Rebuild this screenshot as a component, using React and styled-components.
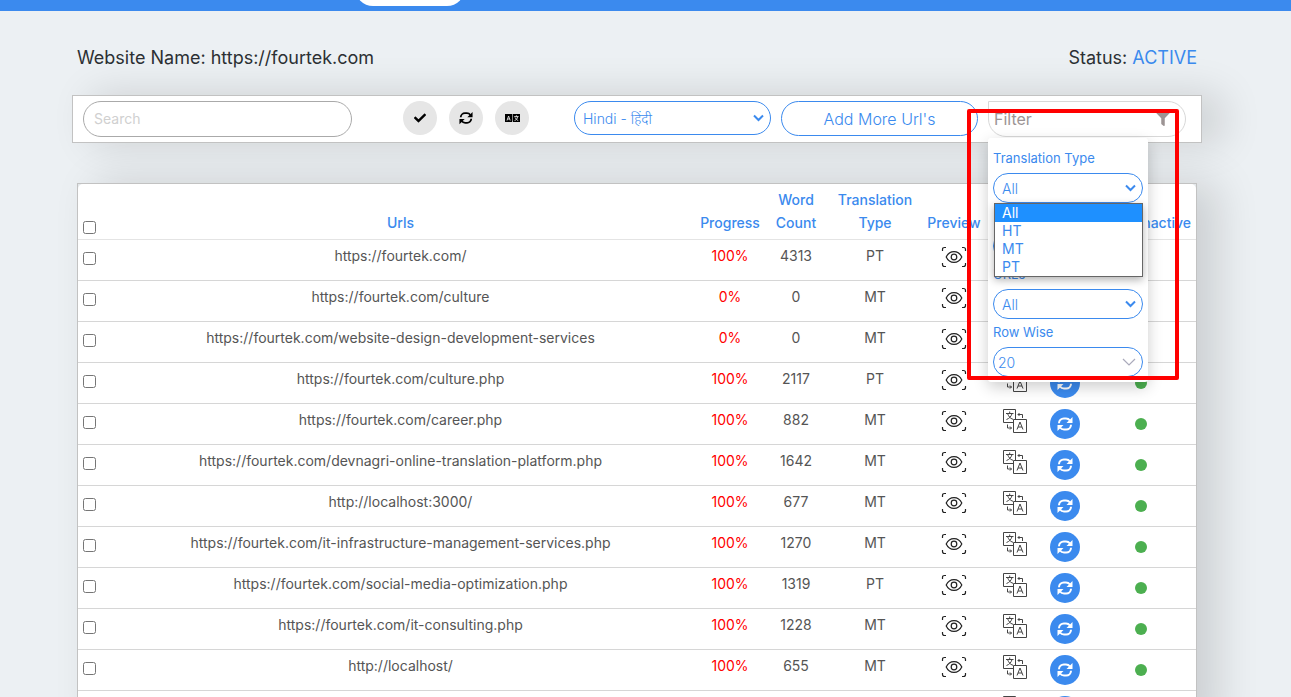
import React from 'react';
import styled, { createGlobalStyle } from 'styled-components';
import { FaCheck, FaFilter } from 'react-icons/fa';

const blue = '#3b8aee';

const GlobalStyle = createGlobalStyle`
  *, *::before, *::after { box-sizing: border-box; }
  body {
    margin: 0;
    background: #ecf0f3;
    font-family: Inter, "Noto Sans", "Liberation Sans", sans-serif;
    font-size: 14px;
    line-height: 23px;
    color: #555;
  }
  input, select, button { font: inherit; }
`;

const TopBar = styled.header`
  height: 11px;
  padding-left: 355px;
  overflow: hidden;
  background: ${blue};
`;

const ActiveTab = styled.span`
  display: block;
  width: 110px;
  height: 36px;
  margin-top: -30px;
  border-radius: 18px;
  background: #fff;
`;

const Page = styled.main`
  padding: 35px 89px 0 72px;
`;

const Heading = styled.div`
  display: flex;
  justify-content: space-between;
  padding: 0 5px;
  margin-bottom: 26px;
  font-size: 18px;
  font-weight: 400;
  color: #2c3034;
`;

const Status = styled.span`
  color: ${blue};
`;

const Toolbar = styled.section`
  position: relative;
  z-index: 1;
  display: flex;
  align-items: flex-start;
  gap: 10px;
  height: 48px;
  padding: 5px 15px 0 10px;
  border: 1px solid #c2c2c2;
  background: #fff;
  box-shadow: 20px 0 40px rgba(0, 0, 0, 0.14);
`;

const Search = styled.input`
  flex: 1;
  min-width: 120px;
  height: 36px;
  margin-right: 41px;
  padding: 0 10px 2px;
  border: 1px solid #aaa;
  border-radius: 18px;
  outline: none;
  &::placeholder { color: #d0d0d0; opacity: 1; }
`;

const Actions = styled.div`
  display: flex;
  gap: 12px;
  margin-right: 35px;
`;

const RoundButton = styled.button`
  display: flex;
  align-items: center;
  justify-content: center;
  width: 34px;
  height: 34px;
  padding: 0;
  border: 0;
  border-radius: 50%;
  background: #e6e6e6;
  color: #000;
`;

const SelectBox = styled.div`
  position: relative;
  width: ${(p) => p.$width};
  height: ${(p) => p.$height};
`;

const NativeSelect = styled.select`
  display: block;
  width: 100%;
  height: 100%;
  padding: 0 24px 0 ${(p) => (p.$plain ? '4px' : '8px')};
  border: 1px solid ${blue};
  border-radius: 18px;
  background: #fff;
  color: ${blue};
  font-weight: 300;
  appearance: none;
`;

const Chevron = styled.svg`
  position: absolute;
  right: 7px;
  top: calc(50% - 4px);
  pointer-events: none;
`;

const AddButton = styled.button`
  width: 197px;
  height: 35px;
  padding: 2px 0 0;
  border: 1px solid ${blue};
  border-radius: 18px;
  background: #fff;
  color: ${blue};
  font-size: 16px;
  font-weight: 300;
`;

const FilterArea = styled.div`
  position: relative;
  width: 198px;
`;

const FilterButton = styled.button`
  display: flex;
  align-items: center;
  justify-content: space-between;
  width: 100%;
  height: 36px;
  padding: 0 15px 0 5px;
  border: 1px solid #d8d8d8;
  border-radius: 0 18px 18px 18px;
  background: #fff;
  color: #9c9494;
  font-size: 16px;
`;

const FilterMenu = styled.div`
  position: absolute;
  top: 37px;
  left: 0;
  width: 160px;
  padding: 9px 5px 3px;
  border-radius: 3px;
  background: #fff;
  box-shadow: 0 5px 15px rgba(0, 0, 0, 0.2);
`;

const Field = styled.div`
  position: relative;
  padding-bottom: 2px;
`;

const Label = styled.label`
  display: block;
  height: 26px;
  font-size: 13px;
  color: ${blue};
`;

const OptionList = styled.ul`
  position: absolute;
  z-index: 2;
  top: 56px;
  left: 1px;
  width: 149px;
  margin: 0;
  padding: 0;
  list-style: none;
  border: 1px solid #666;
  background: #fff;
  box-shadow: 0 3px 8px rgba(0, 0, 0, 0.3);
`;

const Option = styled.li`
  padding-left: 7px;
  line-height: 18px;
  background: ${(p) => (p.$selected ? '#1e90ff' : '#fff')};
  color: ${(p) => (p.$selected ? '#fff' : blue)};
`;

const Highlight = styled.div`
  position: absolute;
  top: 8px;
  left: -21px;
  width: 212px;
  height: 271px;
  border: 4px solid #f00;
  border-radius: 2px;
  pointer-events: none;
`;

const Card = styled.section`
  margin: 40px 5px 0;
  border: 1px solid #c2c2c2;
  border-bottom: 0;
  background: #e4e8eb;
  box-shadow: 20px 0 40px rgba(0, 0, 0, 0.14);
`;

const Table = styled.table`
  width: 100%;
  table-layout: fixed;
  border-collapse: separate;
  border-spacing: 0;
  border-radius: 5px 5px 0 0;
  background: #fff;
  text-align: center;
`;

const Col = styled.col`
  width: ${(p) => p.$width};
`;

const HeadCell = styled.th`
  height: 56px;
  padding: 4px 0 5px;
  vertical-align: bottom;
  border-bottom: 1px solid #e4e4e4;
  color: ${blue};
  font-weight: ${(p) => (p.$strong ? 500 : 400)};
`;

const Cell = styled.td`
  height: 41px;
  padding: 4px 0 0;
  vertical-align: top;
  border-bottom: 1px solid #d6d6d6;
  color: ${(p) => (p.$alert ? '#f00' : '#555')};
  font-weight: 400;
`;

const Check = styled.input`
  display: block;
  width: 13px;
  height: 13px;
  margin: ${(p) => (p.$head ? '0 5px' : '8px 5px 0')};
`;

const Icon = styled.svg`
  display: block;
  margin: 1px auto 0;
`;

const SyncButton = styled.button`
  display: flex;
  align-items: center;
  justify-content: center;
  width: 30px;
  height: 30px;
  margin: 1px auto 0;
  padding: 0;
  border: 0;
  border-radius: 50%;
  background: ${blue};
  color: #fff;
`;

const Dot = styled.span`
  display: block;
  width: 12px;
  height: 12px;
  margin: 10px auto 0;
  border-radius: 50%;
  background: #4caf50;
`;

const Select = ({ id, label, width = '100%', height = '30px', plain, children }) => (
  <SelectBox $width={width} $height={height}>
    <NativeSelect id={id} aria-label={label} $plain={plain}>
      <option>{children}</option>
    </NativeSelect>
    {plain ? (
      <Chevron width="14" height="9" viewBox="0 0 14 9" fill="none" stroke="#aab" strokeWidth="1.2">
        <path d="M1 1l6 6 6-6" />
      </Chevron>
    ) : (
      <Chevron width="11" height="8" viewBox="0 0 11 8" fill="none" stroke={blue} strokeWidth="2">
        <path d="M1 1.500l4.500 4.500L10 1.500" />
      </Chevron>
    )}
  </SelectBox>
);

const SyncIcon = ({ size }) => (
  <svg width={size} height={size} viewBox="0 0 16 16" fill="none" stroke="currentColor" strokeWidth="2">
    <path d="M2 7.200V7a4.800 4.800 0 0 1 4.800-4.500H9a5 5 0 0 1 4 2" />
    <path d="M14 8.800V9a4.800 4.800 0 0 1-4.800 4.500H7a5 5 0 0 1-4-2" />
    <path d="M15.500 1v6H9.500z" fill="currentColor" stroke="none" />
    <path d="M.5 15V9h6z" fill="currentColor" stroke="none" />
  </svg>
);

const LanguageIcon = () => (
  <svg width="15" height="8" viewBox="0 0 15 8">
    <path d="M0 0h7.200v8H0zM7.800 0H15v8H7.800z" fill="#000" />
    <path d="M2 6.500L3.600 2l1.600 4.500M2.600 5h2M9.200 2.600h4.400M11.400 1.300v1.300M9.600 6.500c1.800-.6 2.800-1.900 3-3.900M10.200 3.600c.6 1.500 1.600 2.400 3 2.900" fill="none" stroke="#e6e6e6" strokeWidth=".9" />
  </svg>
);

const PreviewIcon = () => (
  <Icon width="26" height="24" viewBox="0 0 26 24" fill="none" stroke="#222" strokeWidth="1.200">
    <path d="M1.500 6V4.500q0-2 2-2H5M21 2.500h1.500q2 0 2 2V6M24.500 18v1.500q0 2-2 2H21M5 21.500H3.500q-2 0-2-2V18" />
    <path d="M5.200 12c1.800-3.800 4.600-5.400 7.800-5.400s6 1.600 7.800 5.400c-1.800 3.800-4.600 5.400-7.800 5.400S7 15.800 5.200 12z" />
    <circle cx="13" cy="12" r="2.800" />
  </Icon>
);

const TranslateIcon = () => (
  <Icon width="24" height="24" viewBox="0 0 24 24" fill="none" stroke="#444" strokeWidth="1">
    <path d="M10.500 13.500H.5V.5h12v10M10.500 10.500h13v13h-13z" />
    <path d="M3 4.500h7.500M6.700 2.500v2M9 4.500C8.500 7 6.500 9.500 3.500 10.500M4.500 4.500C5.500 7 7 9.500 10 10.300" />
    <path d="M14 20.500l3-7.500 3 7.500M15 18h4" />
    <path d="M15 5.500h4.500v3.500M16.500 4l-1.500 1.500 1.500 1.500M4.500 15.500v3.500h4M7 17.500l1.500 1.500L7 20.500" />
  </Icon>
);

const rows = [
  ['https://fourtek.com/', '100%', '4313', 'PT'],
  ['https://fourtek.com/culture', '0%', '0', 'MT'],
  ['https://fourtek.com/website-design-development-services', '0%', '0', 'MT'],
  ['https://fourtek.com/culture.php', '100%', '2117', 'PT'],
  ['https://fourtek.com/career.php', '100%', '882', 'MT'],
  ['https://fourtek.com/devnagri-online-translation-platform.php', '100%', '1642', 'MT'],
  ['http://localhost:3000/', '100%', '677', 'MT'],
  ['https://fourtek.com/it-infrastructure-management-services.php', '100%', '1270', 'MT'],
  ['https://fourtek.com/social-media-optimization.php', '100%', '1319', 'PT'],
  ['https://fourtek.com/it-consulting.php', '100%', '1228', 'MT'],
  ['http://localhost/', '100%', '655', 'MT'],
  ['', '', '', ''],
];

const columns = ['27px', 'auto', '68px', '64px', '94px', '64px', '58px', '42px', '110px'];

export default function App() {
  return (
    <>
      <GlobalStyle />
      <TopBar><ActiveTab /></TopBar>
      <Page>
        <Heading>
          <span>Website Name: https://fourtek.com</span>
          <span>Status: <Status>ACTIVE</Status></span>
        </Heading>
        <Toolbar>
          <Search type="text" placeholder="Search" aria-label="Search" />
          <Actions>
            <RoundButton aria-label="Approve"><FaCheck size={12} /></RoundButton>
            <RoundButton aria-label="Sync"><SyncIcon size={14} /></RoundButton>
            <RoundButton aria-label="Translate"><LanguageIcon /></RoundButton>
          </Actions>
          <Select label="Language" width="197px" height="34px">Hindi - हिंदी</Select>
          <AddButton>Add More Url's</AddButton>
          <FilterArea>
            <FilterButton>Filter<FaFilter size={14} /></FilterButton>
            <FilterMenu>
              <Field>
                <Label htmlFor="type">Translation Type</Label>
                <Select id="type">All</Select>
                <OptionList>
                  <Option $selected>All</Option>
                  <Option>HT</Option>
                  <Option>MT</Option>
                  <Option>PT</Option>
                </OptionList>
              </Field>
              <Field>
                <Label htmlFor="status" />
                <Select id="status" label="Status" />
              </Field>
              <Field>
                <Label htmlFor="urls">URLs</Label>
                <Select id="urls">All</Select>
              </Field>
              <Field>
                <Label htmlFor="rows">Row Wise</Label>
                <Select id="rows" plain>20</Select>
              </Field>
            </FilterMenu>
            <Highlight />
          </FilterArea>
        </Toolbar>
        <Card>
          <Table>
            <colgroup>
              {columns.map((w, i) => <Col key={i} $width={w} />)}
            </colgroup>
            <thead>
              <tr>
                <HeadCell><Check $head type="checkbox" aria-label="Select all" /></HeadCell>
                <HeadCell $strong>Urls</HeadCell>
                <HeadCell $strong>Progress</HeadCell>
                <HeadCell $strong>Word Count</HeadCell>
                <HeadCell $strong>Translation Type</HeadCell>
                <HeadCell $strong>Preview</HeadCell>
                <HeadCell />
                <HeadCell />
                <HeadCell $strong>Active/Inactive</HeadCell>
              </tr>
            </thead>
            <tbody>
              {rows.map(([url, progress, words, type], i) => (
                <tr key={i}>
                  <Cell><Check type="checkbox" aria-label={`Select ${url}`} /></Cell>
                  <Cell>{url}</Cell>
                  <Cell $alert>{progress}</Cell>
                  <Cell>{words}</Cell>
                  <Cell>{type}</Cell>
                  <Cell><PreviewIcon /></Cell>
                  <Cell><TranslateIcon /></Cell>
                  <Cell><SyncButton aria-label="Sync"><SyncIcon size={16} /></SyncButton></Cell>
                  <Cell><Dot /></Cell>
                </tr>
              ))}
            </tbody>
          </Table>
        </Card>
      </Page>
    </>
  );
}
